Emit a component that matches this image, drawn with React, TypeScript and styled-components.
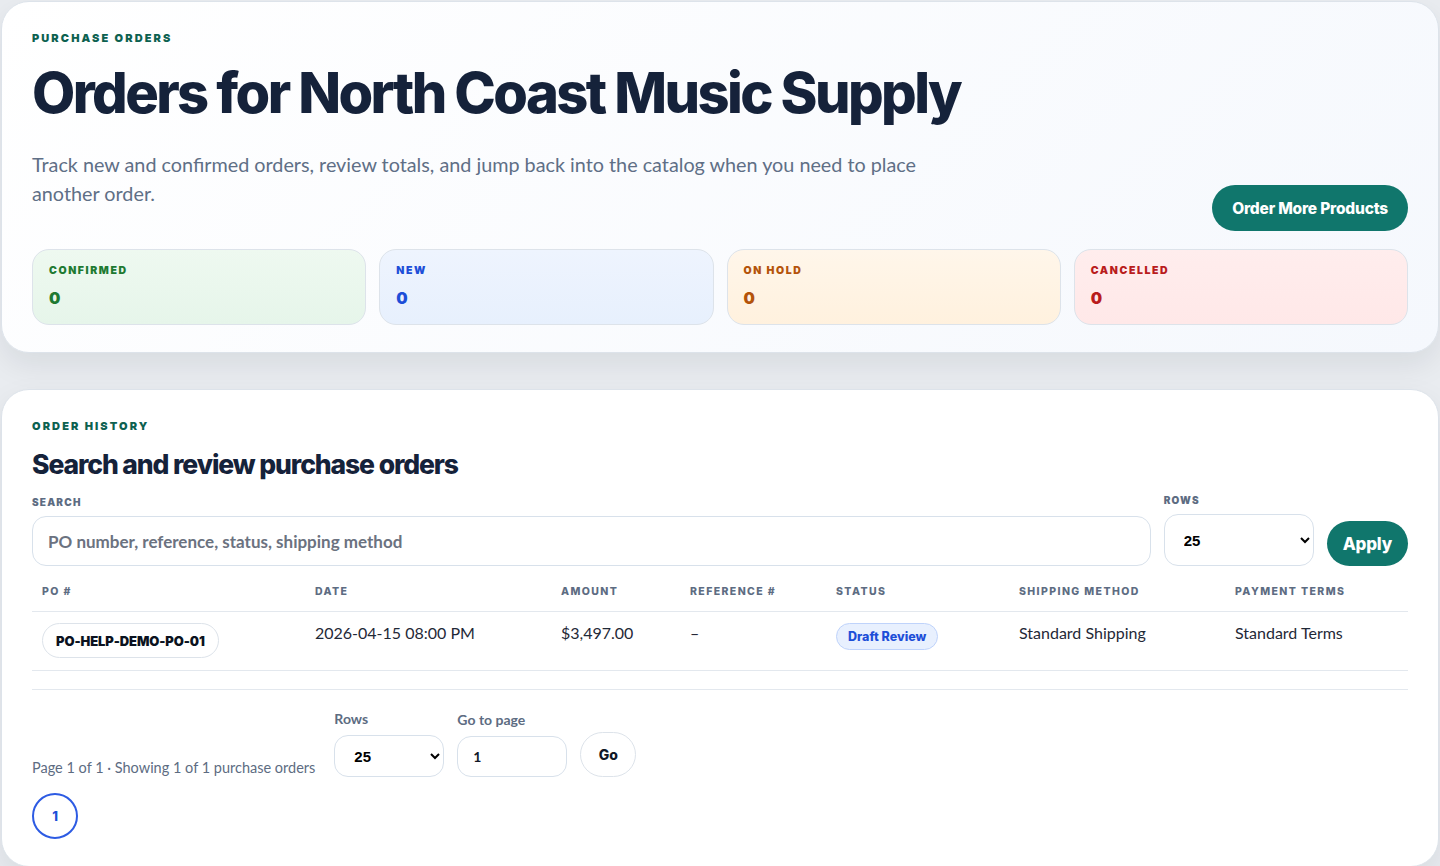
import React from "react";
import styled, { createGlobalStyle } from "styled-components";

const heavy = `Inter, Lato, "Noto Sans", sans-serif`;

const GlobalStyle = createGlobalStyle`
  html, body {
    margin: 0;
    padding: 0;
    background: #e9ecf0;
    font-family: Lato, "Noto Sans", "DejaVu Sans", sans-serif;
    color: #16233a;
  }
  * { box-sizing: border-box; }
`;

const Page = styled.div`
  display: flex;
  flex-direction: column;
  gap: 36px;
  padding: 1px 1px 2px;
`;

const Card = styled.section<{ $tint?: boolean }>`
  border: 1px solid #dde3ea;
  border-radius: 28px;
  background: ${(p) => (p.$tint ? "linear-gradient(135deg, #ffffff 0%, #f5f8fd 100%)" : "#ffffff")};
  box-shadow: 0 12px 30px rgba(15, 23, 42, 0.08);
  padding: 30px 30px 27px;
`;

const Eyebrow = styled.div`
  font-family: ${heavy};
  font-size: 11px;
  font-weight: 900;
  letter-spacing: 2.1px;
  text-transform: uppercase;
  color: #0d6150;
  line-height: 12px;
`;

const Title = styled.h1`
  margin: 13px 0 0;
  font-family: ${heavy};
  font-size: 56px;
  font-weight: 800;
  letter-spacing: -2.6px;
  line-height: 72px;
  color: #15223a;
`;

const HeroRow = styled.div`
  display: flex;
  align-items: flex-end;
  justify-content: space-between;
  margin-top: 21px;
`;

const Lead = styled.p`
  margin: 0 0 23px;
  max-width: 900px;
  font-size: 19.8px;
  line-height: 29px;
  color: #5f6f86;
`;

const PrimaryButton = styled.button<{ $size?: "lg" | "md" }>`
  border: 0;
  border-radius: 999px;
  background: #10766c;
  color: #ffffff;
  font-family: ${heavy};
  font-weight: 800;
  letter-spacing: -0.2px;
  font-size: ${(p) => (p.$size === "lg" ? "15.5px" : "17px")};
  height: ${(p) => (p.$size === "lg" ? "46px" : "45px")};
  padding: ${(p) => (p.$size === "lg" ? "0 20px" : "0 16px")};
  cursor: pointer;
`;

const StatGrid = styled.div`
  display: grid;
  grid-template-columns: repeat(4, 1fr);
  gap: 13px;
  margin-top: 18px;
`;

const tones = {
  green: { bg: "linear-gradient(180deg, #eef9f0, #e6f5ea)", fg: "#1e7a32" },
  blue: { bg: "linear-gradient(180deg, #eef4fe, #e7f0fd)", fg: "#1d4ed8" },
  amber: { bg: "linear-gradient(180deg, #fff6ea, #fff1de)", fg: "#b4530a" },
  red: { bg: "linear-gradient(180deg, #ffeded, #ffe8e8)", fg: "#b91c1c" },
};
type Tone = keyof typeof tones;

const StatCard = styled.div<{ $tone: Tone }>`
  height: 76px;
  border: 1px solid #dde3ea;
  border-radius: 17px;
  background: ${(p) => tones[p.$tone].bg};
  color: ${(p) => tones[p.$tone].fg};
  padding: 15px 16px;
`;

const StatLabel = styled.div`
  font-family: ${heavy};
  font-size: 10.5px;
  font-weight: 900;
  letter-spacing: 1.6px;
  text-transform: uppercase;
  line-height: 12px;
`;

const StatValue = styled.div`
  margin-top: 12px;
  font-family: ${heavy};
  font-size: 16px;
  font-weight: 900;
  line-height: 18px;
`;

const SectionTitle = styled.h2`
  margin: 15px 0 0;
  font-family: ${heavy};
  font-size: 26.5px;
  font-weight: 800;
  letter-spacing: -1.1px;
  line-height: 34px;
  color: #15223a;
`;

const SearchBar = styled.div`
  display: flex;
  align-items: flex-end;
  gap: 13px;
  margin-top: 13px;
`;

const Field = styled.label<{ $grow?: boolean }>`
  display: flex;
  flex-direction: column;
  gap: 8px;
  flex: ${(p) => (p.$grow ? "1" : "none")};
`;

const FieldLabel = styled.span`
  font-family: ${heavy};
  font-size: 10px;
  font-weight: 900;
  letter-spacing: 1.2px;
  text-transform: uppercase;
  color: #5d6c82;
  line-height: 12px;
`;

const TextInput = styled.input<{ $w?: number; $h: number; $small?: boolean }>`
  width: ${(p) => (p.$w ? `${p.$w}px` : "100%")};
  height: ${(p) => p.$h}px;
  border: 1px solid #d8e1eb;
  border-radius: 14px;
  background: #ffffff;
  padding: 0 15px;
  font-family: inherit;
  font-size: ${(p) => (p.$small ? "14px" : "17px")};
  font-weight: 700;
  color: #111827;
  outline: none;
  &::placeholder {
    color: #6b7280;
  }
`;

const Select = styled.select<{ $w: number; $h: number }>`
  width: ${(p) => p.$w}px;
  height: ${(p) => p.$h}px;
  border: 1px solid #d8e1eb;
  border-radius: 14px;
  background: #ffffff;
  padding: 0 10px 0 15px;
  font-family: Arial, "Liberation Sans", sans-serif;
  font-size: 15px;
  font-weight: 700;
  color: #000000;
  outline: none;
`;

const Table = styled.table`
  width: 100%;
  border-collapse: collapse;
  margin-top: 17px;
`;

const Th = styled.th`
  text-align: left;
  padding: 2px 10px 13px;
  font-family: ${heavy};
  font-size: 10.5px;
  font-weight: 800;
  letter-spacing: 1.4px;
  text-transform: uppercase;
  color: #5d6c82;
  border-bottom: 1px solid #e3e8ee;
`;

const Td = styled.td`
  vertical-align: top;
  padding: 11px 10px 12px;
  font-size: 16px;
  color: #1f2937;
  border-bottom: 1px solid #e3e8ee;
  line-height: 20px;
`;

const PoPill = styled.span`
  display: inline-flex;
  align-items: center;
  height: 35px;
  padding: 0 13px;
  border: 1px solid #dde3ea;
  border-radius: 999px;
  font-family: ${heavy};
  font-size: 13px;
  font-weight: 900;
  letter-spacing: -0.1px;
  color: #0b1220;
`;

const StatusBadge = styled.span`
  display: inline-flex;
  align-items: center;
  height: 27px;
  padding: 0 11px;
  border: 1px solid #bfd3fb;
  border-radius: 999px;
  background: #e8f0fe;
  color: #1d4ed8;
  font-family: ${heavy};
  font-size: 12.5px;
  font-weight: 800;
`;

const Footer = styled.div`
  margin-top: 18px;
  border-top: 1px solid #e3e8ee;
  padding-top: 20px;
`;

const FooterRow = styled.div`
  display: flex;
  align-items: flex-end;
  gap: 13px;
`;

const Summary = styled.span`
  font-size: 14.5px;
  color: #5d6c82;
  margin-bottom: 1px;
  margin-right: 6px;
`;

const PagerLabel = styled.span`
  font-size: 14px;
  font-weight: 700;
  color: #5d6c82;
`;

const PagerField = styled.label`
  display: flex;
  flex-direction: column;
  gap: 8px;
`;

const GhostButton = styled.button`
  height: 45px;
  width: 56px;
  border: 1px solid #dde3ea;
  border-radius: 999px;
  background: #ffffff;
  font-family: ${heavy};
  font-size: 14px;
  font-weight: 800;
  color: #111827;
`;

const PageButton = styled.button<{ $active?: boolean }>`
  margin-top: 16px;
  width: 46px;
  height: 46px;
  border-radius: 50%;
  border: 2px solid ${(p) => (p.$active ? "#2d5be3" : "#dde3ea")};
  background: #ffffff;
  color: #1d4ed8;
  font-family: ${heavy};
  font-size: 13px;
  font-weight: 800;
`;

const stats: { label: string; tone: Tone }[] = [
  { label: "Confirmed", tone: "green" },
  { label: "New", tone: "blue" },
  { label: "On Hold", tone: "amber" },
  { label: "Cancelled", tone: "red" },
];

const columns = [
  { label: "PO #", width: "273px" },
  { label: "Date", width: "246px" },
  { label: "Amount", width: "129px" },
  { label: "Reference #", width: "146px" },
  { label: "Status", width: "183px" },
  { label: "Shipping Method", width: "216px" },
  { label: "Payment Terms", width: "auto" },
];

export default function App() {
  return (
    <>
      <GlobalStyle />
      <Page>
        <Card $tint>
          <Eyebrow>Purchase Orders</Eyebrow>
          <Title>Orders for North Coast Music Supply</Title>
          <HeroRow>
            <Lead>
              Track new and confirmed orders, review totals, and jump back into the catalog when you need to place
              another order.
            </Lead>
            <PrimaryButton $size="lg">Order More Products</PrimaryButton>
          </HeroRow>
          <StatGrid>
            {stats.map((s) => (
              <StatCard key={s.label} $tone={s.tone}>
                <StatLabel>{s.label}</StatLabel>
                <StatValue>0</StatValue>
              </StatCard>
            ))}
          </StatGrid>
        </Card>

        <Card>
          <Eyebrow>Order History</Eyebrow>
          <SectionTitle>Search and review purchase orders</SectionTitle>
          <SearchBar>
            <Field $grow>
              <FieldLabel>Search</FieldLabel>
              <TextInput $h={50} placeholder="PO number, reference, status, shipping method" />
            </Field>
            <Field>
              <FieldLabel>Rows</FieldLabel>
              <Select $w={150} $h={52} defaultValue="25">
                <option>10</option>
                <option>25</option>
                <option>50</option>
              </Select>
            </Field>
            <PrimaryButton>Apply</PrimaryButton>
          </SearchBar>

          <Table>
            <thead>
              <tr>
                {columns.map((c) => (
                  <Th key={c.label} style={{ width: c.width }}>
                    {c.label}
                  </Th>
                ))}
              </tr>
            </thead>
            <tbody>
              <tr>
                <Td>
                  <PoPill>PO-HELP-DEMO-PO-01</PoPill>
                </Td>
                <Td>2026-04-15 08:00 PM</Td>
                <Td>$3,497.00</Td>
                <Td>–</Td>
                <Td>
                  <StatusBadge>Draft Review</StatusBadge>
                </Td>
                <Td>Standard Shipping</Td>
                <Td>Standard Terms</Td>
              </tr>
            </tbody>
          </Table>

          <Footer>
            <FooterRow>
              <Summary>Page 1 of 1 · Showing 1 of 1 purchase orders</Summary>
              <PagerField>
                <PagerLabel>Rows</PagerLabel>
                <Select $w={110} $h={42} defaultValue="25">
                  <option>10</option>
                  <option>25</option>
                  <option>50</option>
                </Select>
              </PagerField>
              <PagerField>
                <PagerLabel>Go to page</PagerLabel>
                <TextInput $w={110} $h={41} $small defaultValue="1" />
              </PagerField>
              <GhostButton>Go</GhostButton>
            </FooterRow>
            <PageButton $active>1</PageButton>
          </Footer>
        </Card>
      </Page>
    </>
  );
}
